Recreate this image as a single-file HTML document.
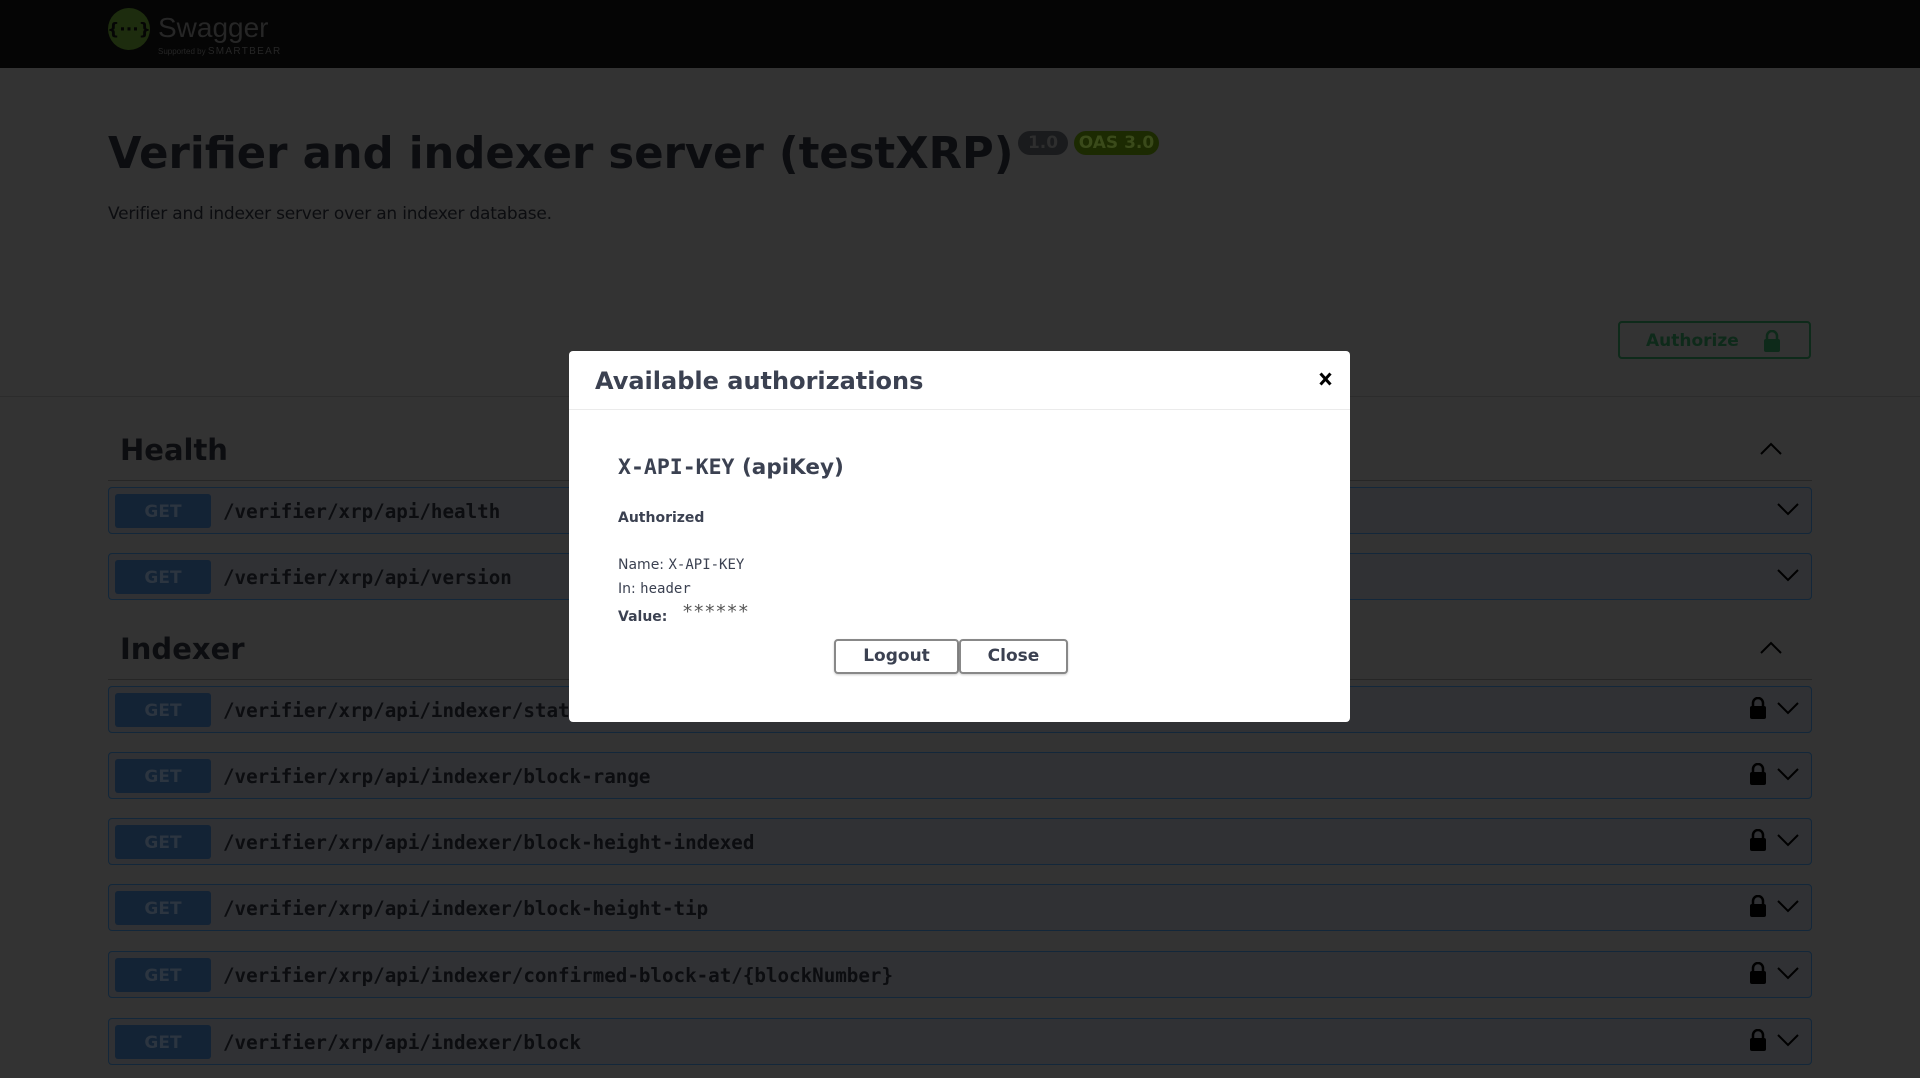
<!DOCTYPE html>
<html><head><meta charset="utf-8">
<style>
*{box-sizing:border-box;margin:0;padding:0}
body{width:1920px;height:1078px;overflow:hidden;background:#333;font-family:"DejaVu Sans","Liberation Sans",sans-serif;color:#0c0d10;position:relative}
.top{position:absolute;left:0;top:0;width:1920px;height:68px;background:#050505}
.abs{position:absolute}
.title{left:108px;top:129px;font-size:43.3px;font-weight:bold;color:#0c0d10;white-space:nowrap}
.badge{top:131px;height:24px;border-radius:12px;font-size:17px;font-weight:bold;color:#2e2e2e;line-height:24px;text-align:center}
.desc{left:108px;top:204px;font-size:17px;color:#0c0d10;letter-spacing:-0.2px}
.authbtn{left:1618px;top:321px;width:193px;height:38px;border:2px solid #0e2a1a;border-radius:4px;color:#0e2a1a;font-weight:bold;font-size:17px;line-height:36px;padding-left:26px}
.sep{left:0;width:1920px;height:1px;background:#2c2c2c}
.sec{left:120px;font-size:29px;font-weight:bold;color:#0c0d10}
.secline{left:108px;width:1704px;height:1px;background:#262626}
.row{left:108px;width:1704px;height:47px;border:1px solid #13273a;border-radius:4px;background:#303134}
.get{position:absolute;left:6px;top:6px;width:96px;height:34px;background:#132335;border-radius:3px;color:#2c3540;font-weight:bold;font-size:17px;text-align:center;line-height:36px}
.path{position:absolute;left:114px;top:12px;font-family:"DejaVu Sans Mono","Liberation Mono",monospace;font-weight:bold;font-size:19.2px;color:#0c0d10}
.chev{position:absolute;right:12px;top:15px}
.lock{position:absolute;right:44px;top:10px}
.modal{left:569px;top:351px;width:781px;height:371px;background:#fff;border-radius:4px;color:#3b4151}
.mh{height:59px;border-bottom:1px solid #ebebeb;position:relative}
.mh h3{position:absolute;left:26px;top:16px;font-size:24px;font-weight:bold}
.btn{position:absolute;top:288px;height:35px;border:2px solid #888;border-radius:4px;background:#fff;font-weight:bold;font-size:17px;color:#3b4151;text-align:center;line-height:31px;box-shadow:0 1px 2px rgba(0,0,0,.2)}
.mono{font-family:"DejaVu Sans Mono","Liberation Mono",monospace}
.lg{color:#262626;font-family:'Liberation Sans',sans-serif}
</style></head><body>
<div class="top">
<svg class="abs" style="left:108px;top:8px" width="42" height="42" viewBox="0 0 42 42"><circle cx="21" cy="21" r="21" fill="#1d2c0e"/><text x="21" y="27" text-anchor="middle" font-size="17" font-weight="bold" fill="#050505" font-family="DejaVu Sans">{···}</text></svg>
<div class="abs lg" style="left:158px;top:12px;font-size:28px">Swagger</div>
<div class="abs lg" style="left:158px;top:46px;font-size:8px">Supported by <span style="font-size:10px;letter-spacing:1.3px">SMARTBEAR</span></div>
</div>
<div class="abs title">Verifier and indexer server (testXRP)</div>
<div class="abs badge" style="left:1018px;width:50px;background:#1a1b1d">1.0</div>
<div class="abs badge" style="left:1074px;width:85px;background:#1c2a02;color:#3a4a1a">OAS 3.0</div>
<div class="abs desc">Verifier and indexer server over an indexer database.</div>
<div class="abs authbtn">Authorize
<svg style="position:absolute;right:28px;top:7px" width="18" height="22" viewBox="0 0 18 22"><path d="M4 10V6a5 5 0 0 1 10 0v4" fill="none" stroke="#0e2a1a" stroke-width="2.5"/><rect x="1" y="9" width="16" height="13" rx="2" fill="#0e2a1a"/></svg></div>
<div class="abs sep" style="top:396px"></div>

<div class="abs sec" style="top:433px">Health</div>
<svg class="abs" style="left:1760px;top:441px" width="22" height="14" viewBox="0 0 22 14"><path d="M1 13L11 3L21 13" fill="none" stroke="#000" stroke-width="2"/></svg>
<div class="abs secline" style="top:480px"></div>
<div class="abs row" style="top:487px"><div class="get">GET</div><div class="path">/verifier/xrp/api/health</div><svg class="chev" width="22" height="14" viewBox="0 0 22 14"><path d="M1 1L11 11L21 1" fill="none" stroke="#000" stroke-width="2"/></svg></div>
<div class="abs row" style="top:553px"><div class="get">GET</div><div class="path">/verifier/xrp/api/version</div><svg class="chev" width="22" height="14" viewBox="0 0 22 14"><path d="M1 1L11 11L21 1" fill="none" stroke="#000" stroke-width="2"/></svg></div>

<div class="abs sec" style="top:632px">Indexer</div>
<svg class="abs" style="left:1760px;top:640px" width="22" height="14" viewBox="0 0 22 14"><path d="M1 13L11 3L21 13" fill="none" stroke="#000" stroke-width="2"/></svg>
<div class="abs secline" style="top:679px"></div>

<div class="abs row" style="top:686px"><div class="get">GET</div><div class="path">/verifier/xrp/api/indexer/state</div><svg class="lock" width="18" height="22" viewBox="0 0 18 22"><path d="M4 10V6a5 5 0 0 1 10 0v4" fill="none" stroke="#000" stroke-width="2.5"/><rect x="1" y="9" width="16" height="13" rx="2"/></svg><svg class="chev" width="22" height="14" viewBox="0 0 22 14"><path d="M1 1L11 11L21 1" fill="none" stroke="#000" stroke-width="2"/></svg></div>
<div class="abs row" style="top:752px"><div class="get">GET</div><div class="path">/verifier/xrp/api/indexer/block-range</div><svg class="lock" width="18" height="22" viewBox="0 0 18 22"><path d="M4 10V6a5 5 0 0 1 10 0v4" fill="none" stroke="#000" stroke-width="2.5"/><rect x="1" y="9" width="16" height="13" rx="2"/></svg><svg class="chev" width="22" height="14" viewBox="0 0 22 14"><path d="M1 1L11 11L21 1" fill="none" stroke="#000" stroke-width="2"/></svg></div>
<div class="abs row" style="top:818px"><div class="get">GET</div><div class="path">/verifier/xrp/api/indexer/block-height-indexed</div><svg class="lock" width="18" height="22" viewBox="0 0 18 22"><path d="M4 10V6a5 5 0 0 1 10 0v4" fill="none" stroke="#000" stroke-width="2.5"/><rect x="1" y="9" width="16" height="13" rx="2"/></svg><svg class="chev" width="22" height="14" viewBox="0 0 22 14"><path d="M1 1L11 11L21 1" fill="none" stroke="#000" stroke-width="2"/></svg></div>
<div class="abs row" style="top:884px"><div class="get">GET</div><div class="path">/verifier/xrp/api/indexer/block-height-tip</div><svg class="lock" width="18" height="22" viewBox="0 0 18 22"><path d="M4 10V6a5 5 0 0 1 10 0v4" fill="none" stroke="#000" stroke-width="2.5"/><rect x="1" y="9" width="16" height="13" rx="2"/></svg><svg class="chev" width="22" height="14" viewBox="0 0 22 14"><path d="M1 1L11 11L21 1" fill="none" stroke="#000" stroke-width="2"/></svg></div>
<div class="abs row" style="top:951px"><div class="get">GET</div><div class="path">/verifier/xrp/api/indexer/confirmed-block-at/{blockNumber}</div><svg class="lock" width="18" height="22" viewBox="0 0 18 22"><path d="M4 10V6a5 5 0 0 1 10 0v4" fill="none" stroke="#000" stroke-width="2.5"/><rect x="1" y="9" width="16" height="13" rx="2"/></svg><svg class="chev" width="22" height="14" viewBox="0 0 22 14"><path d="M1 1L11 11L21 1" fill="none" stroke="#000" stroke-width="2"/></svg></div>
<div class="abs row" style="top:1018px"><div class="get">GET</div><div class="path">/verifier/xrp/api/indexer/block</div><svg class="lock" width="18" height="22" viewBox="0 0 18 22"><path d="M4 10V6a5 5 0 0 1 10 0v4" fill="none" stroke="#000" stroke-width="2.5"/><rect x="1" y="9" width="16" height="13" rx="2"/></svg><svg class="chev" width="22" height="14" viewBox="0 0 22 14"><path d="M1 1L11 11L21 1" fill="none" stroke="#000" stroke-width="2"/></svg></div>

<div class="abs modal">
<div class="mh"><h3>Available authorizations</h3>
<svg style="position:absolute;left:750px;top:21px" width="13" height="14" viewBox="0 0 13 14"><path d="M1.5 1.5L11.5 12.5M11.5 1.5L1.5 12.5" stroke="#000" stroke-width="3"/></svg></div>
<div class="abs" style="left:49px;top:104px;font-size:21.5px;font-weight:bold"><span class="mono">X-API-KEY</span> (apiKey)</div>
<div class="abs" style="left:49px;top:159px;font-size:14px;font-weight:bold">Authorized</div>
<div class="abs" style="left:49px;top:206px;font-size:14px">Name: <span class="mono">X-API-KEY</span></div>
<div class="abs" style="left:49px;top:230px;font-size:14px">In: <span class="mono">header</span></div>
<div class="abs" style="left:49px;top:258px;font-size:14px;font-weight:bold">Value:</div>
<div class="abs mono" style="left:113px;top:251px;font-size:18.5px;color:#555">******</div>
<div class="btn" style="left:265px;width:125px">Logout</div>
<div class="btn" style="left:390px;width:109px">Close</div>
</div>
</body></html>
